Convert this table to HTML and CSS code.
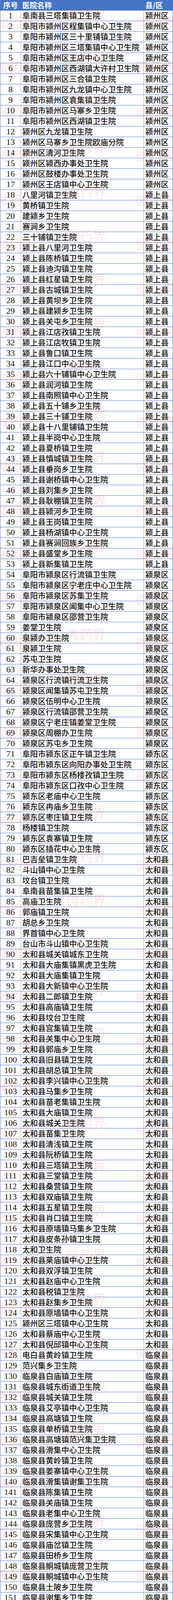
FILE: index.html
```html
<!DOCTYPE html>
<html lang="zh-CN">
<head>
<meta charset="utf-8">
<meta name="viewport" content="width=443, initial-scale=1">
<title>医院名单</title>
<link rel="stylesheet" href="styles.css">
</head>
<body>
<div class="page">
<div class="sheet">
<div class="row head"><span class="no">序号</span><span class="name">医院名称</span><span class="area">县/区</span></div>
<div class="row"><span class="no">1</span><span class="name">阜南县三塔集镇卫生院</span><span class="area">颍州区</span></div>
<div class="row"><span class="no">2</span><span class="name">阜阳市颍州区程集镇中心卫生院</span><span class="area">颍州区</span></div>
<div class="row"><span class="no">3</span><span class="name">阜阳市颍州区三十里铺镇卫生院</span><span class="area">颍州区</span></div>
<div class="row"><span class="no">4</span><span class="name">阜阳市颍州区三塔集镇中心卫生院</span><span class="area">颍州区</span></div>
<div class="row"><span class="no">5</span><span class="name">阜阳市颍州区王店中心卫生院</span><span class="area">颍州区</span></div>
<div class="row"><span class="no">6</span><span class="name">阜阳市颍州区西湖镇大许村卫生院</span><span class="area">颍州区</span></div>
<div class="row"><span class="no">7</span><span class="name">阜阳市颍州区三合镇卫生院</span><span class="area">颍州区</span></div>
<div class="row"><span class="no">8</span><span class="name">阜阳市颍州区九龙镇中心卫生院</span><span class="area">颍州区</span></div>
<div class="row"><span class="no">9</span><span class="name">阜阳市颍州区袁集镇卫生院</span><span class="area">颍州区</span></div>
<div class="row"><span class="no">10</span><span class="name">阜阳市颍州区马寨乡卫生院</span><span class="area">颍州区</span></div>
<div class="row"><span class="no">11</span><span class="name">阜阳市颍州区西湖镇卫生院</span><span class="area">颍州区</span></div>
<div class="row"><span class="no">12</span><span class="name">颍州区九龙镇卫生院</span><span class="area">颍州区</span></div>
<div class="row"><span class="no">13</span><span class="name">颍州区马寨乡卫生院欧庙分院</span><span class="area">颍州区</span></div>
<div class="row"><span class="no">14</span><span class="name">颍州区清河卫生院</span><span class="area">颍州区</span></div>
<div class="row"><span class="no">15</span><span class="name">颍州区颍西办事处卫生院</span><span class="area">颍州区</span></div>
<div class="row"><span class="no">16</span><span class="name">颍州区鼓楼办事处卫生院</span><span class="area">颍州区</span></div>
<div class="row"><span class="no">17</span><span class="name">颍州区王店镇中心卫生院</span><span class="area">颍州区</span></div>
<div class="row"><span class="no">18</span><span class="name">八里河镇卫生院</span><span class="area">颍上县</span></div>
<div class="row"><span class="no">19</span><span class="name">黄桥镇卫生院</span><span class="area">颍上县</span></div>
<div class="row"><span class="no">20</span><span class="name">建颍乡卫生院</span><span class="area">颍上县</span></div>
<div class="row"><span class="no">21</span><span class="name">赛涧乡卫生院</span><span class="area">颍上县</span></div>
<div class="row"><span class="no">22</span><span class="name">三十铺镇卫生院</span><span class="area">颍上县</span></div>
<div class="row"><span class="no">23</span><span class="name">颍上县八里河卫生院</span><span class="area">颍上县</span></div>
<div class="row"><span class="no">24</span><span class="name">颍上县陈桥镇卫生院</span><span class="area">颍上县</span></div>
<div class="row"><span class="no">25</span><span class="name">颍上县迪沟镇卫生院</span><span class="area">颍上县</span></div>
<div class="row"><span class="no">26</span><span class="name">颍上县红星镇卫生院</span><span class="area">颍上县</span></div>
<div class="row"><span class="no">27</span><span class="name">颍上县古城镇卫生院</span><span class="area">颍上县</span></div>
<div class="row"><span class="no">28</span><span class="name">颍上县黄坝乡卫生院</span><span class="area">颍上县</span></div>
<div class="row"><span class="no">29</span><span class="name">颍上县建颍乡卫生院</span><span class="area">颍上县</span></div>
<div class="row"><span class="no">30</span><span class="name">颍上县关屯乡卫生院</span><span class="area">颍上县</span></div>
<div class="row"><span class="no">31</span><span class="name">颍上县江店孜镇卫生院</span><span class="area">颍上县</span></div>
<div class="row"><span class="no">32</span><span class="name">颍上县江店牧镇卫生院</span><span class="area">颍上县</span></div>
<div class="row"><span class="no">33</span><span class="name">颍上县鲁口镇卫生院</span><span class="area">颍上县</span></div>
<div class="row"><span class="no">34</span><span class="name">颍上县江口中心卫生院</span><span class="area">颍上县</span></div>
<div class="row"><span class="no">35</span><span class="name">颍上县六十铺镇中心卫生院</span><span class="area">颍上县</span></div>
<div class="row"><span class="no">36</span><span class="name">颍上县润河镇卫生院</span><span class="area">颍上县</span></div>
<div class="row"><span class="no">37</span><span class="name">颍上县南照镇中心卫生院</span><span class="area">颍上县</span></div>
<div class="row"><span class="no">38</span><span class="name">颍上县五十铺乡卫生院</span><span class="area">颍上县</span></div>
<div class="row"><span class="no">39</span><span class="name">颍上县三十铺卫生院</span><span class="area">颍上县</span></div>
<div class="row"><span class="no">40</span><span class="name">颍上县十八里铺镇卫生院</span><span class="area">颍上县</span></div>
<div class="row"><span class="no">41</span><span class="name">颍上县半岗中心卫生院</span><span class="area">颍上县</span></div>
<div class="row"><span class="no">42</span><span class="name">颍上县夏桥镇卫生院</span><span class="area">颍上县</span></div>
<div class="row"><span class="no">43</span><span class="name">颍上县慎城镇卫生院</span><span class="area">颍上县</span></div>
<div class="row"><span class="no">44</span><span class="name">颍上县垂岗乡卫生院</span><span class="area">颍上县</span></div>
<div class="row"><span class="no">45</span><span class="name">颍上县谢桥镇中心卫生院</span><span class="area">颍上县</span></div>
<div class="row"><span class="no">46</span><span class="name">颍上县刘集乡卫生院</span><span class="area">颍上县</span></div>
<div class="row"><span class="no">47</span><span class="name">颍上县耿棚镇卫生院</span><span class="area">颍上县</span></div>
<div class="row"><span class="no">48</span><span class="name">颍上县颍河乡卫生院</span><span class="area">颍上县</span></div>
<div class="row"><span class="no">49</span><span class="name">颍上县王岗镇卫生院</span><span class="area">颍上县</span></div>
<div class="row"><span class="no">50</span><span class="name">颍上县杨湖镇中心卫生院</span><span class="area">颍上县</span></div>
<div class="row"><span class="no">51</span><span class="name">颍上县赛涧回族乡卫生院</span><span class="area">颍上县</span></div>
<div class="row"><span class="no">52</span><span class="name">颍上县盛堂乡卫生院</span><span class="area">颍上县</span></div>
<div class="row"><span class="no">53</span><span class="name">颍上县新集镇卫生院</span><span class="area">颍上县</span></div>
<div class="row"><span class="no">54</span><span class="name">阜阳市颍泉区行流镇卫生院</span><span class="area">颍泉区</span></div>
<div class="row"><span class="no">55</span><span class="name">阜阳市颍泉区宁老庄中心卫生院</span><span class="area">颍泉区</span></div>
<div class="row"><span class="no">56</span><span class="name">阜阳市颍泉区苏集卫生院</span><span class="area">颍泉区</span></div>
<div class="row"><span class="no">57</span><span class="name">阜阳市颍泉区闻集中心卫生院</span><span class="area">颍泉区</span></div>
<div class="row"><span class="no">58</span><span class="name">阜阳市颍泉区邵营卫生院</span><span class="area">颍泉区</span></div>
<div class="row"><span class="no">59</span><span class="name">姜堂卫生院</span><span class="area">颍泉区</span></div>
<div class="row"><span class="no">60</span><span class="name">泉颍办卫生院</span><span class="area">颍泉区</span></div>
<div class="row"><span class="no">61</span><span class="name">泉颍卫生院</span><span class="area">颍泉区</span></div>
<div class="row"><span class="no">62</span><span class="name">苏屯卫生院</span><span class="area">颍泉区</span></div>
<div class="row"><span class="no">63</span><span class="name">新华办事处卫生院</span><span class="area">颍泉区</span></div>
<div class="row"><span class="no">64</span><span class="name">颍泉区行流镇行流卫生院</span><span class="area">颍泉区</span></div>
<div class="row"><span class="no">65</span><span class="name">颍泉区闻集镇苏屯卫生院</span><span class="area">颍泉区</span></div>
<div class="row"><span class="no">66</span><span class="name">颍泉区伍明中心卫生院</span><span class="area">颍泉区</span></div>
<div class="row"><span class="no">67</span><span class="name">颍泉区行流镇邵营卫生院</span><span class="area">颍泉区</span></div>
<div class="row"><span class="no">68</span><span class="name">颍泉区宁老庄镇姜堂卫生院</span><span class="area">颍泉区</span></div>
<div class="row"><span class="no">69</span><span class="name">颍泉区周棚办卫生院</span><span class="area">颍泉区</span></div>
<div class="row"><span class="no">70</span><span class="name">颍泉区苏屯乡卫生院</span><span class="area">颍泉区</span></div>
<div class="row"><span class="no">71</span><span class="name">阜阳市颍东区正午镇卫生院</span><span class="area">颍东区</span></div>
<div class="row"><span class="no">72</span><span class="name">阜阳市颍东区向阳办事处卫生院</span><span class="area">颍东区</span></div>
<div class="row"><span class="no">73</span><span class="name">阜阳市颍东区杨楼孜镇卫生院</span><span class="area">颍东区</span></div>
<div class="row"><span class="no">74</span><span class="name">阜阳市颍东区口孜中心卫生院</span><span class="area">颍东区</span></div>
<div class="row"><span class="no">75</span><span class="name">颍东区老庙中心卫生院</span><span class="area">颍东区</span></div>
<div class="row"><span class="no">76</span><span class="name">颍东区冉庙乡卫生院</span><span class="area">颍东区</span></div>
<div class="row"><span class="no">77</span><span class="name">颍东区枣庄镇卫生院</span><span class="area">颍东区</span></div>
<div class="row"><span class="no">78</span><span class="name">杨楼镇卫生院</span><span class="area">颍东区</span></div>
<div class="row"><span class="no">79</span><span class="name">颍东区袁寨镇卫生院</span><span class="area">颍东区</span></div>
<div class="row"><span class="no">80</span><span class="name">颍东区插花中心卫生院</span><span class="area">颍东区</span></div>
<div class="row"><span class="no">81</span><span class="name">巴吉垒镇卫生院</span><span class="area">太和县</span></div>
<div class="row"><span class="no">82</span><span class="name">斗山镇中心卫生院</span><span class="area">太和县</span></div>
<div class="row"><span class="no">83</span><span class="name">坟台镇卫生院</span><span class="area">太和县</span></div>
<div class="row"><span class="no">84</span><span class="name">阜南县苗集镇卫生院</span><span class="area">太和县</span></div>
<div class="row"><span class="no">85</span><span class="name">高庙卫生院</span><span class="area">太和县</span></div>
<div class="row"><span class="no">86</span><span class="name">郭庙镇卫生院</span><span class="area">太和县</span></div>
<div class="row"><span class="no">87</span><span class="name">胡总乡卫生院</span><span class="area">太和县</span></div>
<div class="row"><span class="no">88</span><span class="name">界首镇中心卫生院</span><span class="area">太和县</span></div>
<div class="row"><span class="no">89</span><span class="name">台山市斗山镇中心卫生院</span><span class="area">太和县</span></div>
<div class="row"><span class="no">90</span><span class="name">太和县城关镇城东卫生院</span><span class="area">太和县</span></div>
<div class="row"><span class="no">91</span><span class="name">太和县大庙集镇黑虎卫生院</span><span class="area">太和县</span></div>
<div class="row"><span class="no">92</span><span class="name">太和县大庙集镇卫生院</span><span class="area">太和县</span></div>
<div class="row"><span class="no">93</span><span class="name">太和县大新镇中心卫生院</span><span class="area">太和县</span></div>
<div class="row"><span class="no">94</span><span class="name">太和县二郎镇卫生院</span><span class="area">太和县</span></div>
<div class="row"><span class="no">95</span><span class="name">太和县高庙镇卫生院</span><span class="area">太和县</span></div>
<div class="row"><span class="no">96</span><span class="name">太和县坟台卫生院</span><span class="area">太和县</span></div>
<div class="row"><span class="no">97</span><span class="name">太和县宫集镇卫生院</span><span class="area">太和县</span></div>
<div class="row"><span class="no">98</span><span class="name">太和县关集中心卫生院</span><span class="area">太和县</span></div>
<div class="row"><span class="no">99</span><span class="name">太和县郭庙乡卫生院</span><span class="area">太和县</span></div>
<div class="row"><span class="no">100</span><span class="name">太和县旧县镇卫生院</span><span class="area">太和县</span></div>
<div class="row"><span class="no">101</span><span class="name">太和县胡总镇卫生院</span><span class="area">太和县</span></div>
<div class="row"><span class="no">102</span><span class="name">太和县李兴镇中心卫生院</span><span class="area">太和县</span></div>
<div class="row"><span class="no">103</span><span class="name">太和县马集乡卫生院</span><span class="area">太和县</span></div>
<div class="row"><span class="no">104</span><span class="name">太和县苗老集镇卫生院</span><span class="area">太和县</span></div>
<div class="row"><span class="no">105</span><span class="name">太和县大庙镇卫生院</span><span class="area">太和县</span></div>
<div class="row"><span class="no">106</span><span class="name">太和县城关卫生院</span><span class="area">太和县</span></div>
<div class="row"><span class="no">107</span><span class="name">太和县苗集卫生院</span><span class="area">太和县</span></div>
<div class="row"><span class="no">108</span><span class="name">太和县清浅镇卫生院</span><span class="area">太和县</span></div>
<div class="row"><span class="no">109</span><span class="name">太和县阮桥镇卫生院</span><span class="area">太和县</span></div>
<div class="row"><span class="no">110</span><span class="name">太和县三塔镇卫生院</span><span class="area">太和县</span></div>
<div class="row"><span class="no">111</span><span class="name">太和县三堂镇卫生院</span><span class="area">太和县</span></div>
<div class="row"><span class="no">112</span><span class="name">太和县桑营镇卫生院</span><span class="area">太和县</span></div>
<div class="row"><span class="no">113</span><span class="name">太和县双庙镇卫生院</span><span class="area">太和县</span></div>
<div class="row"><span class="no">114</span><span class="name">太和县五星镇卫生院</span><span class="area">太和县</span></div>
<div class="row"><span class="no">115</span><span class="name">太和县肖口镇卫生院</span><span class="area">太和县</span></div>
<div class="row"><span class="no">116</span><span class="name">太和县原墙镇马集乡卫生院</span><span class="area">太和县</span></div>
<div class="row"><span class="no">117</span><span class="name">太和县皮条孙镇卫生院</span><span class="area">太和县</span></div>
<div class="row"><span class="no">118</span><span class="name">太和卫生院</span><span class="area">太和县</span></div>
<div class="row"><span class="no">119</span><span class="name">太和县莱庙镇中心卫生院</span><span class="area">太和县</span></div>
<div class="row"><span class="no">120</span><span class="name">太和县双浮镇卫生院</span><span class="area">太和县</span></div>
<div class="row"><span class="no">121</span><span class="name">太和县赵庙中心卫生院</span><span class="area">太和县</span></div>
<div class="row"><span class="no">122</span><span class="name">太和县税镇卫生院</span><span class="area">太和县</span></div>
<div class="row"><span class="no">123</span><span class="name">太和县赵集乡卫生院</span><span class="area">太和县</span></div>
<div class="row"><span class="no">124</span><span class="name">太和县原墙镇中心卫生院</span><span class="area">太和县</span></div>
<div class="row"><span class="no">125</span><span class="name">颍州区三塔镇中心卫生院</span><span class="area">太和县</span></div>
<div class="row"><span class="no">126</span><span class="name">太和县蔡庙中心卫生院</span><span class="area">太和县</span></div>
<div class="row"><span class="no">127</span><span class="name">太和县倪邱镇中心卫生院</span><span class="area">太和县</span></div>
<div class="row"><span class="no">128</span><span class="name">电白县黄岭镇卫生院</span><span class="area">临泉县</span></div>
<div class="row"><span class="no">129</span><span class="name">范兴集乡卫生院</span><span class="area">临泉县</span></div>
<div class="row"><span class="no">130</span><span class="name">临泉县白庙镇卫生院</span><span class="area">临泉县</span></div>
<div class="row"><span class="no">131</span><span class="name">临泉县城东街道卫生院</span><span class="area">临泉县</span></div>
<div class="row"><span class="no">132</span><span class="name">临泉县城关镇卫生院</span><span class="area">临泉县</span></div>
<div class="row"><span class="no">133</span><span class="name">临泉县艾亭镇中心卫生院</span><span class="area">临泉县</span></div>
<div class="row"><span class="no">134</span><span class="name">临泉县高塘镇卫生院</span><span class="area">临泉县</span></div>
<div class="row"><span class="no">135</span><span class="name">临泉县单桥镇卫生院</span><span class="area">临泉县</span></div>
<div class="row"><span class="no">136</span><span class="name">临泉县高塘镇范兴集卫生院</span><span class="area">临泉县</span></div>
<div class="row"><span class="no">137</span><span class="name">临泉县滑集中心卫生院</span><span class="area">临泉县</span></div>
<div class="row"><span class="no">138</span><span class="name">临泉县黄岭镇卫生院</span><span class="area">临泉县</span></div>
<div class="row"><span class="no">139</span><span class="name">临泉县姜寨镇中心卫生院</span><span class="area">临泉县</span></div>
<div class="row"><span class="no">140</span><span class="name">临泉县滑集镇谢集卫生院</span><span class="area">临泉县</span></div>
<div class="row"><span class="no">141</span><span class="name">临泉县陈集镇卫生院</span><span class="area">临泉县</span></div>
<div class="row"><span class="no">142</span><span class="name">临泉县关庙镇卫生院</span><span class="area">临泉县</span></div>
<div class="row"><span class="no">143</span><span class="name">临泉县老集中心卫生院</span><span class="area">临泉县</span></div>
<div class="row"><span class="no">144</span><span class="name">临泉县庞营乡卫生院</span><span class="area">临泉县</span></div>
<div class="row"><span class="no">145</span><span class="name">临泉县宋集镇中心卫生院</span><span class="area">临泉县</span></div>
<div class="row"><span class="no">146</span><span class="name">临泉县庙岔镇卫生院</span><span class="area">临泉县</span></div>
<div class="row"><span class="no">147</span><span class="name">临泉县田桥乡卫生院</span><span class="area">临泉县</span></div>
<div class="row"><span class="no">148</span><span class="name">临泉县鲖城镇庞营卫生院</span><span class="area">临泉县</span></div>
<div class="row"><span class="no">149</span><span class="name">临泉县鲖城镇中心卫生院</span><span class="area">临泉县</span></div>
<div class="row"><span class="no">150</span><span class="name">临泉县土陂乡卫生院</span><span class="area">临泉县</span></div>
<div class="row"><span class="no">151</span><span class="name">临泉县谢集乡卫生院</span><span class="area">临泉县</span></div>
<div class="row"><span class="no">152</span><span class="name">临泉县韦寨镇卫生院</span><span class="area">临泉县</span></div>
<div class="row"><span class="no">153</span><span class="name">临泉县杨桥镇牛庄卫生院</span><span class="area">临泉县</span></div>
<div class="row"><span class="no">154</span><span class="name">临泉县瓦店镇卫生院</span><span class="area">临泉县</span></div>
<div class="row"><span class="no">155</span><span class="name">临泉县杨桥镇中心卫生院</span><span class="area">临泉县</span></div>
<div class="row"><span class="no">156</span><span class="name">临泉县杨小街镇卫生院</span><span class="area">临泉县</span></div>
<div class="row"><span class="no">157</span><span class="name">临泉县张新镇卫生院</span><span class="area">临泉县</span></div>
<div class="row"><span class="no">158</span><span class="name">临泉县迎仙中心卫生院</span><span class="area">临泉县</span></div>
<div class="row"><span class="no">159</span><span class="name">临泉县长官中心卫生院</span><span class="area">临泉县</span></div>
<div class="row"><span class="no">160</span><span class="name">临泉县于寨卫生院</span><span class="area">临泉县</span></div>
<div class="row"><span class="no">161</span><span class="name">临泉县张营乡卫生院</span><span class="area">临泉县</span></div>
<div class="row"><span class="no">162</span><span class="name">临泉县牛庄乡卫生院</span><span class="area">临泉县</span></div>
<div class="row"><span class="no">163</span><span class="name">临泉县邢塘镇卫生院</span><span class="area">临泉县</span></div>
<div class="row"><span class="no">164</span><span class="name">临泉县城关街道卫生院</span><span class="area">临泉县</span></div>
<div class="row"><span class="no">165</span><span class="name">临泉县陶老乡卫生院</span><span class="area">临泉县</span></div>
<div class="row"><span class="no">166</span><span class="name">临泉县谭棚镇卫生院</span><span class="area">临泉县</span></div>
<div class="row"><span class="no">167</span><span class="name">吕寨卫生院</span><span class="area">临泉县</span></div>
<div class="row"><span class="no">168</span><span class="name">张营乡卫生院</span><span class="area">临泉县</span></div>
<div class="row"><span class="no">169</span><span class="name">安徽省界首市代桥镇尹庄卫生院</span><span class="area">界首市</span></div>
<div class="row"><span class="no">170</span><span class="name">代桥镇卫生院</span><span class="area">界首市</span></div>
<div class="row"><span class="no">171</span><span class="name">界首市邴集乡卫生院</span><span class="area">界首市</span></div>
<div class="row"><span class="no">172</span><span class="name">界首市大黄镇卫生院</span><span class="area">界首市</span></div>
<div class="row"><span class="no">173</span><span class="name">界首市代桥卫生院</span><span class="area">界首市</span></div>
<div class="row"><span class="no">174</span><span class="name">界首市光武中心卫生院</span><span class="area">界首市</span></div>
<div class="row"><span class="no">175</span><span class="name">界首市芦村镇枣林卫生院</span><span class="area">界首市</span></div>
<div class="row"><span class="no">176</span><span class="name">界首市靳寨乡卫生院</span><span class="area">界首市</span></div>
<div class="row"><span class="no">177</span><span class="name">界首市泉阳镇卫生院王烈桥分院</span><span class="area">界首市</span></div>
<div class="row"><span class="no">178</span><span class="name">界首市任寨乡卫生院</span><span class="area">界首市</span></div>
<div class="row"><span class="no">179</span><span class="name">界首市泉阳镇中心卫生院</span><span class="area">界首市</span></div>
<div class="row"><span class="no">180</span><span class="name">界首市舒庄卫生院</span><span class="area">界首市</span></div>
<div class="row"><span class="no">181</span><span class="name">界首市陶庙镇中心卫生院</span><span class="area">界首市</span></div>
<div class="row"><span class="no">182</span><span class="name">界首市王集卫生院</span><span class="area">界首市</span></div>
<div class="row"><span class="no">183</span><span class="name">界首市顾集镇卫生院</span><span class="area">界首市</span></div>
<div class="row"><span class="no">184</span><span class="name">界首市芦村中心卫生院</span><span class="area">界首市</span></div>
<div class="row"><span class="no">185</span><span class="name">界首市砖集镇黄庄卫生院</span><span class="area">界首市</span></div>
<div class="row"><span class="no">186</span><span class="name">界首市砖集镇中心卫生院</span><span class="area">界首市</span></div>
<div class="row"><span class="no">187</span><span class="name">界首市新马集卫生院</span><span class="area">界首市</span></div>
<div class="row"><span class="no">188</span><span class="name">界首市颍南卫生院</span><span class="area">界首市</span></div>
<div class="row"><span class="no">189</span><span class="name">界首市陶庙镇段寨卫生院</span><span class="area">界首市</span></div>
<div class="row"><span class="no">190</span><span class="name">舒庄镇卫生院</span><span class="area">界首市</span></div>
<div class="row"><span class="no">191</span><span class="name">太和县郭庙镇卫生院</span><span class="area">界首市</span></div>
<div class="row"><span class="no">192</span><span class="name">天仙镇卫生院</span><span class="area">界首市</span></div>
<div class="row"><span class="no">193</span><span class="name">田营镇卫生院</span><span class="area">界首市</span></div>
<div class="row"><span class="no">194</span><span class="name">新马集镇卫生院</span><span class="area">界首市</span></div>
<div class="row"><span class="no">195</span><span class="name">阜南县方集镇卫生院</span><span class="area">阜南县</span></div>
<div class="row"><span class="no">196</span><span class="name">阜南县城关卫生院</span><span class="area">阜南县</span></div>
<div class="row"><span class="no">197</span><span class="name">阜南县工业园区卫生院</span><span class="area">阜南县</span></div>
<div class="row"><span class="no">198</span><span class="name">阜南县洪河桥镇卫生院</span><span class="area">阜南县</span></div>
<div class="row"><span class="no">199</span><span class="name">阜南县曹集镇中心卫生院</span><span class="area">阜南县</span></div>
<div class="row"><span class="no">200</span><span class="name">阜南县会龙镇卫生院</span><span class="area">阜南县</span></div>
<div class="row"><span class="no">201</span><span class="name">阜南县柳沟镇卫生院</span><span class="area">阜南县</span></div>
<div class="row"><span class="no">202</span><span class="name">阜南县老观乡卫生院</span><span class="area">阜南县</span></div>
<div class="row"><span class="no">203</span><span class="name">阜南县鹿城镇第二卫生院</span><span class="area">阜南县</span></div>
<div class="row"><span class="no">204</span><span class="name">阜南县王店孜乡卫生院</span><span class="area">阜南县</span></div>
<div class="row"><span class="no">205</span><span class="name">阜南县王化镇卫生院</span><span class="area">阜南县</span></div>
<div class="row"><span class="no">206</span><span class="name">阜南县王家坝镇卫生院</span><span class="area">阜南县</span></div>
<div class="row"><span class="no">207</span><span class="name">阜南县柴集镇中心卫生院</span><span class="area">阜南县</span></div>
<div class="row"><span class="no">208</span><span class="name">阜南县许堂乡卫生院</span><span class="area">阜南县</span></div>
<div class="row"><span class="no">209</span><span class="name">阜南县段郢乡中心卫生院</span><span class="area">阜南县</span></div>
<div class="row"><span class="no">210</span><span class="name">阜南县地城镇卫生院</span><span class="area">阜南县</span></div>
<div class="row"><span class="no">211</span><span class="name">阜南县张寨镇卫生院</span><span class="area">阜南县</span></div>
<div class="row"><span class="no">212</span><span class="name">阜南县张寨镇卫生院华佗分院</span><span class="area">阜南县</span></div>
<div class="row"><span class="no">213</span><span class="name">阜南县于集乡卫生院</span><span class="area">阜南县</span></div>
<div class="row"><span class="no">214</span><span class="name">阜南县赵集镇卫生院</span><span class="area">阜南县</span></div>
<div class="row"><span class="no">215</span><span class="name">阜南县朱寨镇卫生院</span><span class="area">阜南县</span></div>
<div class="row"><span class="no">216</span><span class="name">阜南县中岗镇卫生院</span><span class="area">阜南县</span></div>
<div class="row"><span class="no">217</span><span class="name">阜南县龙王乡卫生院</span><span class="area">阜南县</span></div>
<div class="row"><span class="no">218</span><span class="name">阜南县黄岗镇中心卫生院</span><span class="area">阜南县</span></div>
<div class="row"><span class="no">219</span><span class="name">阜南县焦陂镇卫生院</span><span class="area">阜南县</span></div>
<div class="row"><span class="no">220</span><span class="name">阜南县新村镇卫生院</span><span class="area">阜南县</span></div>
<div class="row"><span class="no">221</span><span class="name">阜南县田集镇卫生院</span><span class="area">阜南县</span></div>
<div class="row"><span class="no">222</span><span class="name">郜台乡卫生院</span><span class="area">阜南县</span></div>
<div class="row"><span class="no">223</span><span class="name">苗集镇卫生院</span><span class="area">阜南县</span></div>
<div class="row"><span class="no">224</span><span class="name">三塔镇卫生院</span><span class="area">阜南县</span></div>
<div class="row"><span class="no">225</span><span class="name">突泉县太和乡卫生院</span><span class="area">阜南县</span></div>
<div class="row"><span class="no">226</span><span class="name">赵集乡卫生院</span><span class="area">阜南县</span></div>
<div class="row"><span class="no">227</span><span class="name">阜南县公桥乡卫生院</span><span class="area">阜南县</span></div>
<div class="row"><span class="no">228</span><span class="name">阜南县王堰镇卫生院</span><span class="area">阜南县</span></div>
</div>
<div class="watermarks" id="wm"></div>
<div class="credit">头条 @阜南发布</div>
</div>
<script src="script.js"></script>
</body>
</html>
```

FILE: styles.css
```css
html {
  -webkit-text-size-adjust: 100%;
  text-size-adjust: 100%;
}
html, body {
  margin: 0;
  padding: 0;
  background: #ffffff;
}
.page {
  position: relative;
  width: 443px;
  height: 6184px;
  overflow: hidden;
}
.sheet {
  width: 443px;
  box-sizing: border-box;
  border-left: 1px solid #5d7fc4;
  border-right: 1px solid #5d7fc4;
  font-family: "Noto Sans CJK SC", sans-serif;
  color: #111111;
}
.row {
  display: flex;
  height: 27px;
  box-sizing: border-box;
  border-bottom: 1px solid #5d7fc4;
}
.row > span {
  display: block;
  box-sizing: border-box;
  height: 26px;
  white-space: nowrap;
}
.no {
  width: 53px;
  flex: none;
  text-align: center;
  border-right: 1px solid #9fb2dc;
  font-family: "Liberation Serif", serif;
  font-size: 22px;
  line-height: 26px;
}
.name {
  width: 314px;
  flex: none;
  padding-left: 3px;
  border-right: 1px solid #9fb2dc;
  font-size: 20px;
  font-weight: 500;
  line-height: 26px;
}
.area {
  width: 74px;
  flex: none;
  padding-left: 4px;
  font-size: 20px;
  font-weight: 500;
  line-height: 26px;
}
.head {
  background: #4673c4;
  color: #ffffff;
  border-bottom-color: #4a6db5;
}
.head > span {
  font-family: "Noto Sans CJK SC", sans-serif;
  font-size: 19px;
  font-weight: 700;
  border-right: none;
}
.head .no {
  text-align: left;
  padding-left: 7px;
}
.watermarks {
  position: absolute;
  left: 0;
  top: 0;
  width: 443px;
  height: 6184px;
  pointer-events: none;
  overflow: hidden;
}
.wm {
  position: absolute;
  font-family: "Noto Sans CJK SC", sans-serif;
  font-size: 34px;
  line-height: 1;
  color: rgba(232, 90, 90, 0.16);
  white-space: nowrap;
}
.credit {
  position: absolute;
  right: 12px;
  bottom: 6px;
  font-family: "Noto Sans CJK SC", sans-serif;
  font-size: 13px;
  line-height: 1;
  color: rgba(80, 80, 80, 0.75);
  text-shadow: 0 0 2px #ffffff;
}
```

FILE: script.js
```js
(function () {
  var box = document.getElementById('wm');
  var pitch = 113.5;
  for (var k = 0; k < 55; k++) {
    var spots = [
      { x: 170, y: 17 + pitch * k },
      { x: -12, y: 40 + pitch * k },
      { x: 347, y: 40 + pitch * k }
    ];
    for (var i = 0; i < spots.length; i++) {
      var s = document.createElement('span');
      s.className = 'wm';
      s.textContent = '微药界';
      s.style.left = spots[i].x + 'px';
      s.style.top = Math.round(spots[i].y) + 'px';
      box.appendChild(s);
    }
  }
})();
```
